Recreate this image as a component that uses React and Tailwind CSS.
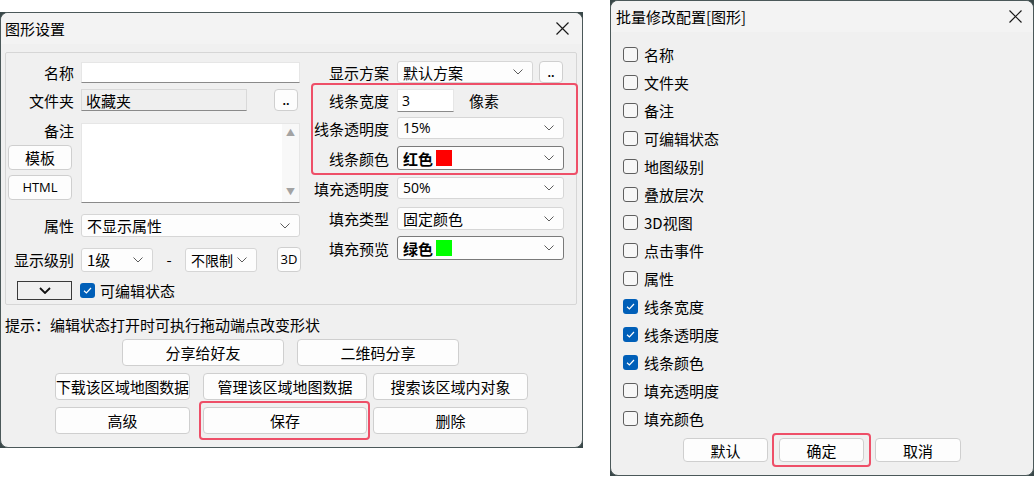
import React from 'react';

const Chevron = ({ className = '' }) => (
  <svg width="10" height="6" viewBox="0 0 10 6" className={`shrink-0 ${className}`}>
    <polyline points="0.5,0.5 5,5 9.5,0.5" fill="none" stroke="#5c5c5c" strokeWidth="1" />
  </svg>
);

const CloseX = () => (
  <svg width="13" height="13" viewBox="0 0 13 13">
    <path d="M0.5 0.5 L12.5 12.5 M12.5 0.5 L0.5 12.5" stroke="#1a1a1a" strokeWidth="1.2" />
  </svg>
);

const Check = ({ checked }) =>
  checked ? (
    <span className="w-[15px] h-[15px] rounded-[3px] bg-[#005fb8] flex items-center justify-center shrink-0">
      <svg width="11" height="11" viewBox="0 0 11 11">
        <path d="M2 5.8 L4.4 8 L9 3" fill="none" stroke="#fff" strokeWidth="1.2" />
      </svg>
    </span>
  ) : (
    <span className="w-[15px] h-[15px] rounded-[3px] border border-[#5f5f5f] bg-[#f7f7f7] shrink-0" />
  );

function Select({ w, h = 22, children, dark }) {
  return (
    <div
      className={`flex items-center justify-between pl-[5px] pr-[9px] rounded-[3px] border bg-[#fdfdfd] shrink-0 ${dark ? 'border-[#7a7a7a]' : 'border-[#d6d6d6]'}`}
      style={{ width: w, height: h }}
    >
      <div className="flex items-center leading-none whitespace-nowrap">{children}</div>
      <Chevron />
    </div>
  );
}

function Btn({ w, h = 27, children, className = '' }) {
  return (
    <div
      className={`flex items-center justify-center rounded-[4px] border border-[#cfcfcf] bg-[#fdfdfd] leading-none whitespace-nowrap shrink-0 ${className}`}
      style={{ width: w, height: h }}
    >
      {children}
    </div>
  );
}

const Label = ({ w, children }) => (
  <div className="text-right leading-none shrink-0" style={{ width: w }}>{children}</div>
);

function ShapeSettings() {
  return (
    <div className="mt-[12px] w-[583px] h-[436px] bg-[#3a4849] shrink-0">
      <div className="h-full rounded-lg border border-[#4b5859] bg-[#f0f0f0] flex flex-col overflow-hidden">
        <div className="h-[31px] bg-[#f3f3f3] flex items-center justify-between pl-[4px] pr-[13px]">
          <span className="leading-none">图形设置</span>
          <CloseX />
        </div>
        <div className="px-[4px] flex flex-col">
          <div className="mt-[8px] h-[253px] w-[572px] border border-[#d6d6d6] rounded-[2px] flex">
            {/* left column */}
            <div className="w-[295px] pl-[2px] flex flex-col">
              <div className="mt-[9px] h-[21px] flex items-center gap-[7px]">
                <Label w={66}>名称</Label>
                <div className="w-[219px] h-full bg-white border border-[#e6e6e6] border-b-[#8a8a8a]" />
              </div>
              <div className="mt-[6px] h-[22px] flex items-center gap-[7px]">
                <Label w={66}>文件夹</Label>
                <div className="w-[166px] h-full bg-[#efefef] border border-[#d9d9d9] border-b-[#8a8a8a] flex items-center pl-[4px] leading-none">收藏夹</div>
                <Btn w={24} h={22} className="ml-[20px] text-[11px] font-bold">..</Btn>
              </div>
              <div className="mt-[12px] h-[80px] flex gap-[9px]">
                <div className="w-[64px] flex flex-col">
                  <div className="h-[16px] leading-none text-right -mr-[2px]">备注</div>
                  <Btn w={64} h={25} className="mt-[6px]">模板</Btn>
                  <Btn w={64} h={25} className="mt-[5px] text-[13px] font-['Open_Sans',sans-serif]">HTML</Btn>
                </div>
                <div className="w-[219px] h-full bg-white border border-[#e6e6e6] border-b-[#8a8a8a] flex justify-end">
                  <div className="w-[17px] bg-[#f8f8f8] flex flex-col items-center justify-between pt-[4px] pb-[6px] text-[9px] text-[#a3a3a3] leading-none">
                    <span>▲</span>
                    <span>▼</span>
                  </div>
                </div>
              </div>
              <div className="mt-[11px] h-[23px] flex items-center gap-[7px]">
                <Label w={66}>属性</Label>
                <Select w={219} h={23}>不显示属性</Select>
              </div>
              <div className="mt-[10px] h-[25px] flex items-center gap-[7px]">
                <Label w={66}>显示级别</Label>
                <Select w={72} h={24}>1级</Select>
                <span className="w-[22px] text-center leading-none">-</span>
                <Select w={72} h={24}><span className="text-[14px]">不限制</span></Select>
                <Btn w={24} h={25} className="ml-[13px] text-[13px] font-['Open_Sans',sans-serif]">3D</Btn>
              </div>
              <div className="mt-[8px] h-[20px] flex items-center">
                <div className="ml-[9px] w-[55px] h-[19px] border border-[#3a3a3a] flex items-center justify-center">
                  <svg width="12" height="7" viewBox="0 0 12 7">
                    <polyline points="1,1 6,6 11,1" fill="none" stroke="#111" strokeWidth="1.8" />
                  </svg>
                </div>
                <span className="ml-[8px]"><Check checked /></span>
                <span className="ml-[5px] leading-none">可编辑状态</span>
              </div>
            </div>
            {/* right column */}
            <div className="relative flex-1 pl-[11px] flex flex-col">
              <div className="mt-[8px] h-[22px] flex items-center gap-[8px]">
                <Label w={77}>显示方案</Label>
                <Select w={136}>默认方案</Select>
                <Btn w={24} h={22} className="-ml-[2px] text-[11px] font-bold">..</Btn>
              </div>
              <div className="mt-[6px] h-[23px] flex items-center gap-[8px]">
                <Label w={77}>线条宽度</Label>
                <div className="w-[57px] h-full bg-white border border-[#e6e6e6] border-b-[#8a8a8a] flex items-center pl-[4px] text-[14px] font-['Open_Sans',sans-serif] leading-none">3</div>
                <span className="ml-[7px] leading-none">像素</span>
              </div>
              <div className="mt-[5px] h-[22px] flex items-center gap-[8px]">
                <Label w={77}>线条透明度</Label>
                <Select w={167}><span className="text-[14px] font-['Open_Sans',sans-serif]">15%</span></Select>
              </div>
              <div className="mt-[7px] h-[24px] flex items-center gap-[8px]">
                <Label w={77}>线条颜色</Label>
                <Select w={167} h={24} dark>
                  <span className="font-bold">红色</span>
                  <span className="ml-[3px] w-[16px] h-[16px] bg-[#ff0000]" />
                </Select>
              </div>
              <div className="mt-[7px] h-[22px] flex items-center gap-[8px]">
                <Label w={77}>填充透明度</Label>
                <Select w={167}><span className="text-[14px] font-['Open_Sans',sans-serif]">50%</span></Select>
              </div>
              <div className="mt-[8px] h-[23px] flex items-center gap-[8px]">
                <Label w={77}>填充类型</Label>
                <Select w={167} h={23}>固定颜色</Select>
              </div>
              <div className="mt-[6px] h-[24px] flex items-center gap-[8px]">
                <Label w={77}>填充预览</Label>
                <Select w={167} h={24} dark>
                  <span className="font-bold">绿色</span>
                  <span className="ml-[3px] w-[16px] h-[16px] bg-[#00ff00]" />
                </Select>
              </div>
              <div className="absolute left-[10px] top-[30px] w-[267px] h-[92px] border-[2px] border-[#ee4f68] rounded-[4px]" />
            </div>
          </div>
          <div className="mt-[9px] h-[20px] flex items-center leading-none">提示：编辑状态打开时可执行拖动端点改变形状</div>
          <div className="mt-[5px] ml-[117px] flex gap-[13px]">
            <Btn w={162}>分享给好友</Btn>
            <Btn w={162}>二维码分享</Btn>
          </div>
          <div className="mt-[7px] ml-[50px] flex">
            <Btn w={135} className="tracking-[-0.25px]">下载该区域地图数据</Btn>
            <Btn w={164} className="ml-[13px]">管理该区域地图数据</Btn>
            <Btn w={155} className="ml-[6px]">搜索该区域内对象</Btn>
          </div>
          <div className="mt-[7px] ml-[50px] flex">
            <Btn w={135}>高级</Btn>
            <div className="relative ml-[13px]">
              <Btn w={164} className="border-[#0067c0] border-[1.5px]">保存</Btn>
              <div className="absolute -left-[4px] -top-[6px] w-[171px] h-[39px] border-[2px] border-[#ee4f68] rounded-[4px]" />
            </div>
            <Btn w={155} className="ml-[6px]">删除</Btn>
          </div>
        </div>
      </div>
    </div>
  );
}

const fields = [
  ['名称', false], ['文件夹', false], ['备注', false], ['可编辑状态', false],
  ['地图级别', false], ['叠放层次', false], ['3D视图', false], ['点击事件', false],
  ['属性', false], ['线条宽度', true], ['线条透明度', true], ['线条颜色', true],
  ['填充透明度', false], ['填充颜色', false],
];

function BatchEdit() {
  return (
    <div className="ml-[27px] w-[424px] h-[476px] bg-[#3a4849] shrink-0">
      <div className="h-full rounded-lg border border-[#4b5859] bg-[#f0f0f0] flex flex-col overflow-hidden">
        <div className="h-[31px] bg-[#f3f3f3] flex items-center justify-between pl-[5px] pr-[11px]">
          <span className="leading-none">批量修改配置[图形]</span>
          <CloseX />
        </div>
        <div className="pt-[8px] flex flex-col">
          {fields.map(([name, on]) => (
            <div key={name} className="h-[28px] pl-[12px] flex items-center gap-[6px]">
              <Check checked={on} />
              <span className="leading-none">{name}</span>
            </div>
          ))}
        </div>
        <div className="mt-[6px] flex justify-center gap-[11px]">
          <Btn w={85} h={24}>默认</Btn>
          <div className="relative">
            <Btn w={85} h={24} className="border-[#0067c0] border-[1.5px]">确定</Btn>
            <div className="absolute -left-[7px] -top-[5px] w-[99px] h-[34px] border-[2px] border-[#ee4f68] rounded-[4px]" />
          </div>
          <Btn w={86} h={24}>取消</Btn>
        </div>
      </div>
    </div>
  );
}

export default function App() {
  return (
    <div className="w-[1034px] h-[478px] bg-white flex items-start text-[15px] text-black font-['Noto_Sans_CJK_SC',sans-serif] whitespace-nowrap overflow-hidden">
      <ShapeSettings />
      <BatchEdit />
    </div>
  );
}
